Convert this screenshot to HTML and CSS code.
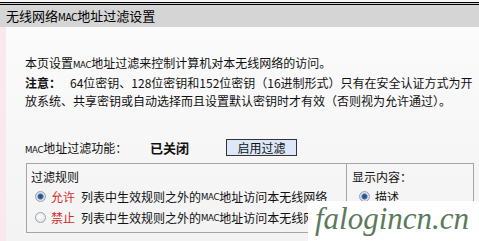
FILE: index.html
```html
<!DOCTYPE html>
<html lang="zh-CN">
<head>
    <meta charset="UTF-8">
    <title>无线网络MAC地址过滤设置</title>
    <link rel="stylesheet" href="styles.css">
</head>
<body>
    <div class="top-rule"></div>
    <div class="title">无线网络<span class="mac">MAC</span>地址过滤设置</div>

    <div class="page">
        <p class="intro">本页设置<span class="mac">MAC</span>地址过滤来控制计算机对本无线网络的访问。</p>
        <p class="note"><b>注意：</b><span class="gap"></span>64位密钥、128位密钥和152位密钥（16进制形式）只有在安全认证方式为开<br>放系统、共享密钥或自动选择而且设置默认密钥时才有效（否则视为允许通过）。</p>

        <div class="switch-row">
            <span class="label"><span class="mac">MAC</span>地址过滤功能：</span>
            <b class="state">已关闭</b>
            <button class="btn">启用过滤</button>
        </div>

        <div class="rules">
            <div class="rules-left">
                <div class="cell-title">过滤规则</div>
                <div class="radio-row"><span class="radio checked"></span><span class="red">允许</span>列表中生效规则之外的<span class="mac">MAC</span>地址访问本无线网络</div>
                <div class="radio-row"><span class="radio"></span><span class="red">禁止</span>列表中生效规则之外的<span class="mac">MAC</span>地址访问本无线网络</div>
            </div>
            <div class="rules-right">
                <div class="cell-title">显示内容：</div>
                <div class="radio-row indent"><span class="radio checked"></span>描述</div>
            </div>
        </div>
    </div>

    <div class="watermark">falogincn.cn</div>
</body>
</html>
```

FILE: styles.css
```css
body {
    margin: 0;
    width: 479px;
    height: 241px;
    overflow: hidden;
    position: relative;
    background: #f4f4f4;
    font-family: "Noto Sans CJK SC", "DejaVu Sans", sans-serif;
    font-size: 12px;
    color: #111;
}

/* double rule above the title */
.top-rule {
    margin-top: 2px;
    height: 1px;
    background: #cfcfcf;
    border-top: 1px solid #000;
    border-bottom: 1px solid #000;
}

.title {
    background: #d5d5d5;
    height: 22px;
    line-height: 22px;
    padding-left: 6px;
    font-size: 13px;
    color: #000;
}

.title .mac {
    font-size: 10px;
}

.mac {
    font-family: "DejaVu Sans Condensed", "DejaVu Sans", sans-serif;
    font-size: 9.5px;
    letter-spacing: -0.3px;
}

.page {
    border-left: 6px solid #f8e9ec;
    background: linear-gradient(#fbfbfb, #f3f3f3);
    padding: 27px 0 0 19px;
    height: 214px;
    box-sizing: border-box;
}

.intro,
.note {
    margin: 0;
    line-height: 18px;
    white-space: nowrap;
}

.note b {
    font-weight: bold;
}

.gap {
    display: inline-block;
    width: 9px;
}

.switch-row {
    margin-top: 28px;
    height: 18px;
    display: flex;
    align-items: center;
}

.label {
    width: 125px;
}

.state {
    font-size: 13px;
    width: 76px;
}

.btn {
    font-family: inherit;
    font-size: 12px;
    height: 17px;
    width: 71px;
    padding: 0;
    line-height: 15px;
    background: #dce7f7;
    border: 1px solid #333;
    color: #111;
}

.rules {
    margin: 7px 0 0 1px;
    width: 448px;
    border: 1px solid #a5a5a5;
    display: grid;
    grid-template-columns: 320px 1fr;
    box-sizing: border-box;
}

.rules-left {
    border-right: 1px solid #a5a5a5;
    padding: 4px 0 4px 4px;
}

.rules-right {
    padding: 4px 0 0 5px;
}

.cell-title {
    line-height: 18px;
    height: 18px;
}

.radio-row {
    height: 21px;
    line-height: 21px;
    display: flex;
    align-items: center;
    white-space: nowrap;
    padding-left: 4px;
}

.radio-row.indent {
    padding-left: 7px;
}

.radio {
    width: 11px;
    height: 11px;
    border-radius: 50%;
    border: 1px solid #9aa3ad;
    background: radial-gradient(circle at 40% 40%, #ffffff, #d8dde3);
    margin-right: 5px;
    box-sizing: border-box;
    flex: none;
}

.radio.checked {
    background: radial-gradient(circle, #1f3f78 0, #3e6bb0 2.5px, #dfe6ee 3.5px, #c4ccd6 100%);
}

.red {
    color: #d42a2a;
    margin-right: 6px;
}

/* site watermark stamped over the corner */
.watermark {
    position: absolute;
    right: 0;
    bottom: 0;
    width: 171px;
    height: 40px;
    background: #fff;
    font-family: "Liberation Serif", serif;
    font-style: italic;
    font-size: 31px;
    line-height: 36px;
    color: #5b7a5d;
    padding-left: 7px;
    box-sizing: border-box;
    white-space: nowrap;
}
```
